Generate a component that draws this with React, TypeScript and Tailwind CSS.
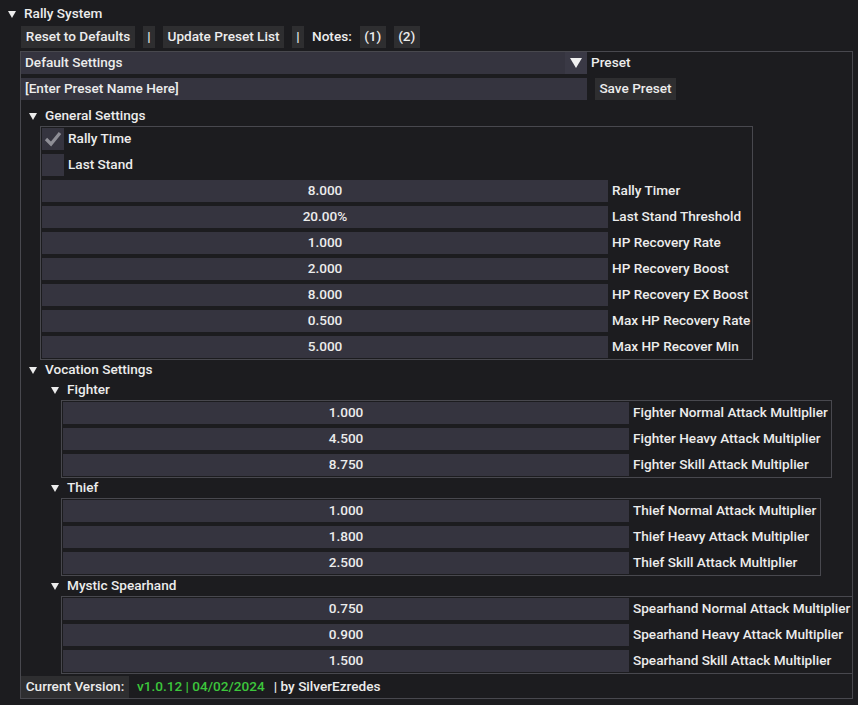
import React from 'react';

const font = { fontFamily: 'Roboto, "Noto Sans", sans-serif' };

function Tri({ big = false }: { big?: boolean }) {
  if (big) {
    return (
      <svg width="12" height="10" viewBox="0 0 12 10" className="block">
        <polygon points="0,0 12,0 6,10" fill="#f0f0f0" />
      </svg>
    );
  }
  return (
    <svg width="8" height="7" viewBox="0 0 8 7" className="block shrink-0">
      <polygon points="0,0 8,0 4,7" fill="#ececec" />
    </svg>
  );
}

function TreeRow({ label, pad }: { label: string; pad: string }) {
  return (
    <div className={`flex items-center h-[20px] ${pad}`}>
      <Tri />
      <span className="ml-[8px]">{label}</span>
    </div>
  );
}

function Field({ value, label }: { value: string; label: string }) {
  return (
    <div className="flex items-center h-[22px] shrink-0">
      <div className="w-[566px] h-full bg-[#35343f] flex items-center justify-center">{value}</div>
      <span className="ml-[4px] whitespace-nowrap">{label}</span>
    </div>
  );
}

function Check({ label, checked }: { label: string; checked?: boolean }) {
  return (
    <div className="flex items-center h-[22px]">
      <div className="w-[22px] h-[22px] bg-[#35343f] flex items-center justify-center">
        {checked && (
          <svg width="22" height="22" viewBox="0 0 22 22">
            <polyline points="4,11 9,16 18,5" fill="none" stroke="#8e8e96" strokeWidth="3.2" />
          </svg>
        )}
      </div>
      <span className="ml-[4px]">{label}</span>
    </div>
  );
}

function Btn({ children, w }: { children: React.ReactNode; w: string }) {
  return (
    <div className={`h-[22px] ${w} bg-[#2e2e30] flex items-center justify-center whitespace-nowrap`}>{children}</div>
  );
}

type Item = [string, string];

function Group({ rows, w }: { rows: Item[]; w: string }) {
  return (
    <div className={`ml-[40px] ${w} border border-[#48484e] p-[1px] flex flex-col gap-[4px] overflow-hidden`}>
      {rows.map(([v, l]) => (
        <Field key={l} value={v} label={l} />
      ))}
    </div>
  );
}

export default function App() {
  const general: Item[] = [
    ['8.000', 'Rally Timer'],
    ['20.00%', 'Last Stand Threshold'],
    ['1.000', 'HP Recovery Rate'],
    ['2.000', 'HP Recovery Boost'],
    ['8.000', 'HP Recovery EX Boost'],
    ['0.500', 'Max HP Recovery Rate'],
    ['5.000', 'Max HP Recover Min'],
  ];
  const fighter: Item[] = [
    ['1.000', 'Fighter Normal Attack Multiplier'],
    ['4.500', 'Fighter Heavy Attack Multiplier'],
    ['8.750', 'Fighter Skill Attack Multiplier'],
  ];
  const thief: Item[] = [
    ['1.000', 'Thief Normal Attack Multiplier'],
    ['1.800', 'Thief Heavy Attack Multiplier'],
    ['2.500', 'Thief Skill Attack Multiplier'],
  ];
  const spear: Item[] = [
    ['0.750', 'Spearhand Normal Attack Multiplier'],
    ['0.900', 'Spearhand Heavy Attack Multiplier'],
    ['1.500', 'Spearhand Skill Attack Multiplier'],
  ];

  return (
    <div
      className="w-[858px] h-[705px] overflow-hidden bg-[#1c1c1f] text-[#ececec] text-[13.6px] font-medium leading-none pt-[4px]"
      style={font}
    >
      <TreeRow label="Rally System" pad="pl-[8px]" />

      {/* toolbar */}
      <div className="flex items-center gap-[8px] mt-[2px] pl-[21px]">
        <Btn w="w-[114px]">Reset to Defaults</Btn>
        <Btn w="w-[12px]">|</Btn>
        <Btn w="w-[121px]">Update Preset List</Btn>
        <Btn w="w-[12px]">|</Btn>
        <span>Notes:</span>
        <Btn w="w-[26px]">(1)</Btn>
        <Btn w="w-[26px]">(2)</Btn>
      </div>

      {/* outer box */}
      <div className="mt-[3px] ml-[20px] w-[833px] border border-[#48484e] flex flex-col overflow-hidden">
        <div className="flex items-center h-[22px]">
          <div className="w-[566px] h-full bg-[#35343f] flex items-center justify-between pl-[4px]">
            <span>Default Settings</span>
            <div className="w-[22px] h-full bg-[#3a3945] flex items-center justify-center">
              <Tri big />
            </div>
          </div>
          <span className="ml-[4px]">Preset</span>
        </div>

        <div className="flex items-center h-[22px] mt-[4px]">
          <div className="w-[566px] h-full bg-[#35343f] flex items-center pl-[4px]">[Enter Preset Name Here]</div>
          <div className="ml-[8px]">
            <Btn w="w-[81px]">Save Preset</Btn>
          </div>
        </div>

        <div className="mt-[6px]">
          <TreeRow label="General Settings" pad="pl-[8px]" />
        </div>
        <div className="ml-[19px] w-[713px] border border-[#48484e] p-[1px] flex flex-col gap-[4px]">
          <Check label="Rally Time" checked />
          <Check label="Last Stand" />
          {general.map(([v, l]) => (
            <Field key={l} value={v} label={l} />
          ))}
        </div>

        <TreeRow label="Vocation Settings" pad="pl-[8px]" />
        <TreeRow label="Fighter" pad="pl-[30px]" />
        <Group rows={fighter} w="w-[771px]" />
        <TreeRow label="Thief" pad="pl-[30px]" />
        <Group rows={thief} w="w-[760px]" />
        <TreeRow label="Mystic Spearhand" pad="pl-[30px]" />
        <Group rows={spear} w="w-[792px]" />

        <div className="flex items-center h-[22px] mt-[2px]">
          <Btn w="w-[108px]">Current Version:</Btn>
          <span className="ml-[8px] text-[#3cc63c]">v1.0.12 | 04/02/2024</span>
          <span className="ml-[9px]">| by SilverEzredes</span>
        </div>
      </div>
    </div>
  );
}
